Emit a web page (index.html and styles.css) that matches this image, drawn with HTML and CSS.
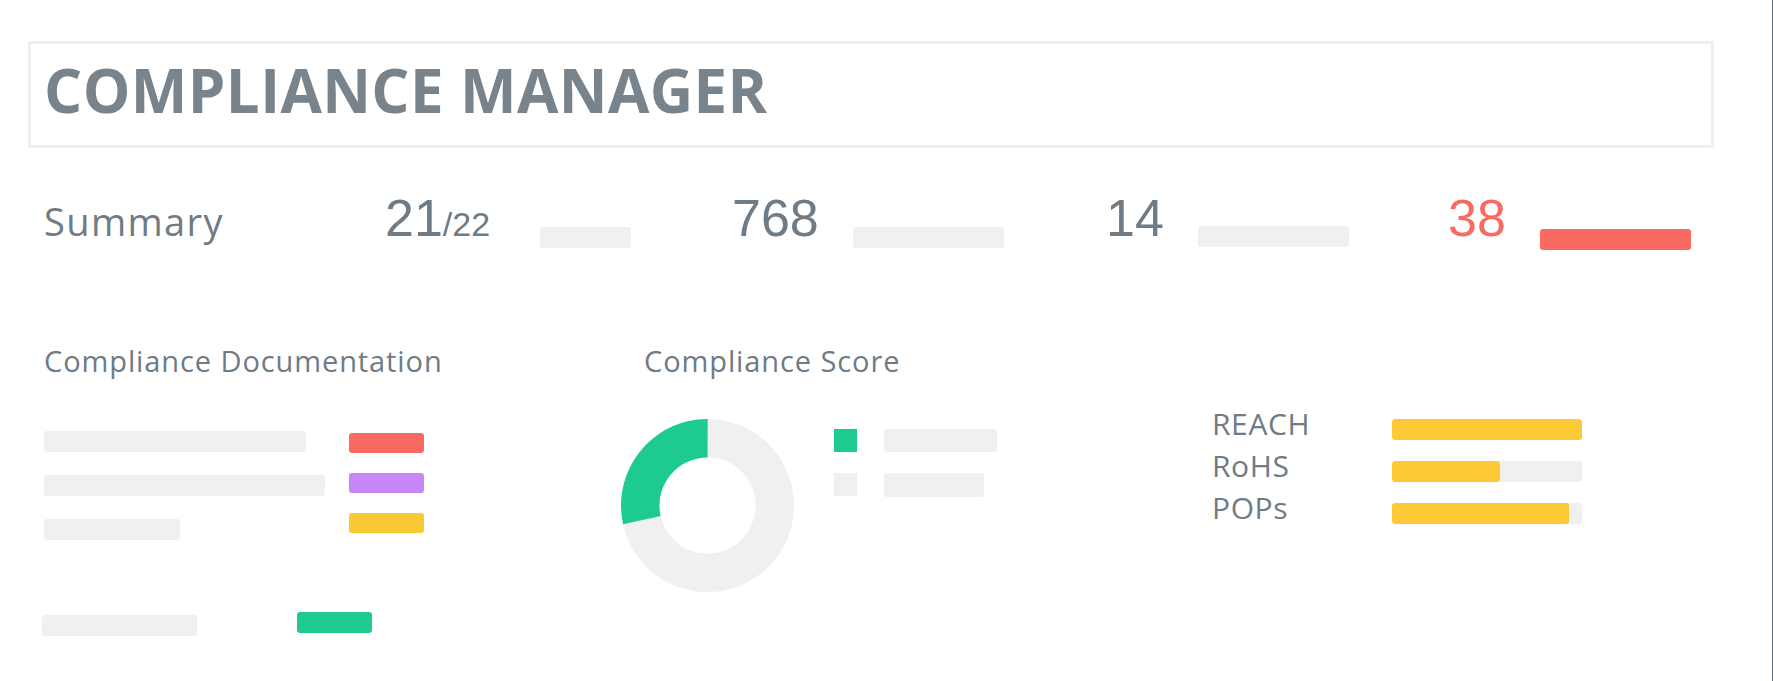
FILE: index.html
```html
<!DOCTYPE html>
<html lang="en">
<head>
<meta charset="utf-8">
<title>Compliance Manager</title>
<link rel="stylesheet" href="styles.css">
</head>
<body>
<div class="page">
  <header class="title-box">
    <h1 class="title">COMPLIANCE MANAGER</h1>
  </header>

  <section class="summary">
    <div class="summary-label">Summary</div>
    <div class="stat stat--first">
      <span class="stat-num">21<small class="stat-den">/22</small></span>
      <span class="bar bar--short"></span>
    </div>
    <div class="stat">
      <span class="stat-num">768</span>
      <span class="bar bar--mid"></span>
    </div>
    <div class="stat">
      <span class="stat-num">14</span>
      <span class="bar bar--mid bar--up"></span>
    </div>
    <div class="stat stat--alert">
      <span class="stat-num">38</span>
      <span class="bar bar--mid bar--alert"></span>
    </div>
  </section>

  <section class="panels">
    <div class="panel panel--docs">
      <h2 class="panel-title">Compliance Documentation</h2>
      <div class="doc-list">
        <div class="doc-bars">
          <span class="bar doc-bar doc-bar--a"></span>
          <span class="bar doc-bar doc-bar--b"></span>
          <span class="bar doc-bar doc-bar--c"></span>
        </div>
        <div class="doc-tags">
          <span class="tag tag--red"></span>
          <span class="tag tag--purple"></span>
          <span class="tag tag--yellow"></span>
        </div>
      </div>
      <div class="doc-footer">
        <span class="bar doc-bar doc-bar--d"></span>
        <span class="tag tag--green"></span>
      </div>
    </div>

    <div class="panel panel--score">
      <h2 class="panel-title panel-title--score">Compliance Score</h2>
      <div class="score">
        <svg class="donut" viewBox="0 0 173 173" width="173" height="173" aria-hidden="true">
          <circle cx="86.5" cy="86.5" r="67.25" fill="none" stroke="#f0f0f0" stroke-width="38.5"/>
          <circle cx="86.5" cy="86.5" r="67.25" fill="none" stroke="#1dcb8f" stroke-width="38.5" stroke-dasharray="120.4 302.15" transform="rotate(167.4 86.5 86.5)"/>
        </svg>
        <div class="legend">
          <div class="legend-row">
            <span class="swatch swatch--green"></span>
            <span class="bar legend-bar legend-bar--a"></span>
          </div>
          <div class="legend-row">
            <span class="swatch swatch--gray"></span>
            <span class="bar legend-bar legend-bar--b"></span>
          </div>
        </div>
      </div>
    </div>

    <div class="panel panel--regs">
      <div class="regs">
        <div class="reg-label">REACH</div>
        <div class="track"><span class="fill" style="width:100%"></span></div>
        <div class="reg-label">RoHS</div>
        <div class="track"><span class="fill" style="width:57%"></span></div>
        <div class="reg-label">POPs</div>
        <div class="track"><span class="fill" style="width:93%"></span></div>
      </div>
    </div>
  </section>
</div>
</body>
</html>
```

FILE: styles.css
```css
html, body {
  margin: 0;
  padding: 0;
  background: #ffffff;
}

body {
  font-family: "Open Sans", "Liberation Sans", sans-serif;
  color: #6f7b85;
}

.page {
  box-sizing: border-box;
  min-height: 100vh;
  padding: 41px 58px 0 28px;
  border-right: 1px solid #64727c;
}

/* Title */
.title-box {
  border: 3px solid #efefef;
  padding: 16px 13px 25px;
}

.title {
  margin: 0;
  font-family: "Open Sans", "Liberation Sans", sans-serif;
  font-weight: 700;
  font-size: 60px;
  line-height: 60px;
  letter-spacing: 0.4px;
  color: #78838c;
}

/* Summary row */
.summary {
  display: grid;
  grid-template-columns: 341px 347px 374px 342px 1fr;
  align-items: start;
  margin-top: 44px;
  padding-left: 16px;
}

.summary-label {
  margin-top: 10px;
  font-weight: 400;
  font-size: 38px;
  line-height: 1;
  letter-spacing: 1.4px;
  color: #6f7b85;
}

.stat {
  display: flex;
  align-items: flex-start;
  gap: 34px;
}

.stat-num {
  font-family: "Liberation Sans", Arial, sans-serif;
  font-size: 52px;
  line-height: 52px;
  color: #6f7b85;
}

.stat-den {
  font-size: 34px;
  line-height: 1;
}

.stat--alert .stat-num {
  color: #f96a62;
}

.bar {
  display: block;
  height: 21px;
  background: #f0f0f0;
  border-radius: 3px;
}

.stat .bar {
  margin-top: 35px;
}

.stat--first .bar {
  margin-left: 16px;
}

.bar--short { width: 91px; }
.bar--mid { width: 151px; }
.stat .bar--up { margin-top: 34px; }
.stat .bar--alert {
  background: #f96a62;
  margin-top: 37px;
}

/* Lower panels */
.panels {
  display: grid;
  grid-template-columns: 577px 591px 1fr;
  margin-top: 93px;
  padding-left: 16px;
}

.panel-title {
  margin: 0;
  font-weight: 400;
  font-size: 29px;
  line-height: 35px;
  letter-spacing: 0.9px;
  color: #6f7b85;
}

.panel-title--score {
  padding-left: 23px;
}

/* Documentation */
.doc-list {
  display: grid;
  grid-template-columns: 305px 75px;
  margin-top: 53px;
}

.doc-bars {
  display: flex;
  flex-direction: column;
  gap: 23px;
}

.doc-bar--a { width: 262px; }
.doc-bar--b { width: 281px; }
.doc-bar--c { width: 136px; }
.doc-bar--d {
  width: 155px;
  margin-left: -2px;
  margin-top: 3px;
}

.doc-tags {
  display: flex;
  flex-direction: column;
  gap: 20px;
  margin-top: 2px;
}

.tag {
  display: block;
  width: 75px;
  height: 20px;
  border-radius: 3px;
}

.tag--red { background: #f96a62; }
.tag--purple { background: #c886fb; }
.tag--yellow { background: #f9c933; }
.tag--green {
  background: #1dcb8f;
  height: 21px;
}

.doc-footer {
  display: flex;
  align-items: flex-start;
  gap: 100px;
  margin-top: 72px;
}

/* Score */
.score {
  display: flex;
  align-items: flex-start;
  gap: 40px;
  margin-top: 41px;
}

.donut {
  display: block;
  flex: none;
}

.legend {
  display: flex;
  flex-direction: column;
  gap: 21px;
  margin-top: 10px;
}

.legend-row {
  display: flex;
  align-items: flex-start;
  gap: 27px;
}

.swatch {
  display: block;
  width: 23px;
  height: 23px;
}

.swatch--green { background: #1dcb8f; }
.swatch--gray { background: #f0f0f0; }

.legend-bar {
  height: 23px;
}
.legend-bar--a { width: 113px; }
.legend-bar--b { width: 100px; height: 24px; }

/* Regulations */
.regs {
  display: grid;
  grid-template-columns: 180px 190px;
  grid-auto-rows: 42px;
  margin-top: 60px;
}

.reg-label {
  font-weight: 400;
  font-size: 30px;
  line-height: 42px;
  letter-spacing: 0.6px;
  color: #6f7b85;
}

.track {
  height: 21px;
  margin-top: 16px;
  background: #f0f0f0;
  border-radius: 3px;
  overflow: hidden;
}

.fill {
  display: block;
  height: 100%;
  background: #fdc935;
  border-radius: 3px;
}
```
